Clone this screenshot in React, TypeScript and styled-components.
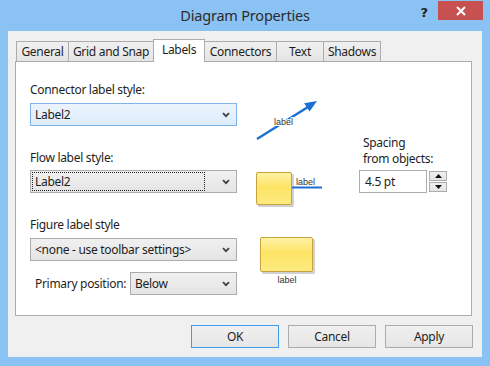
import styled, { createGlobalStyle } from "styled-components";

const Global = createGlobalStyle`
  html, body {
    margin: 0;
    padding: 0;
    background: #8bc2f4;
  }
  body {
    font-family: "Noto Sans", "Open Sans", sans-serif;
    font-size: 12px;
    letter-spacing: -0.3px;
    color: #1e1e1e;
  }
`;

const tabs = [
  { name: "General", width: 53 },
  { name: "Grid and Snap", width: 86 },
  { name: "Labels", width: 52 },
  { name: "Connectors", width: 73 },
  { name: "Text", width: 48 },
  { name: "Shadows", width: 58 },
];

const Window = styled.div`
  width: 490px;
  height: 366px;
  display: flex;
  flex-direction: column;
  background: #8bc2f4;
  overflow: hidden;
`;

const TitleBar = styled.div`
  height: 31px;
  display: grid;
  grid-template-columns: 1fr auto 1fr;
  align-items: start;
`;

const Title = styled.div`
  grid-column: 2;
  font-size: 14.5px;
  letter-spacing: -0.2px;
  line-height: 20px;
  padding-top: 5px;
  color: #2b2b2b;
`;

const TitleButtons = styled.div`
  grid-column: 3;
  justify-self: end;
  display: flex;
  padding-top: 1px;
  padding-right: 7px;
`;

const HelpButton = styled.div`
  width: 28px;
  height: 19px;
  padding-top: 6px;
  box-sizing: border-box;
  text-align: center;
  font-family: "DejaVu Sans", sans-serif;
  font-weight: bold;
  font-size: 13px;
  line-height: 12px;
  color: #222;
`;

const CloseButton = styled.div`
  width: 45px;
  height: 19px;
  background: #c75050;
  display: flex;
  align-items: center;
  justify-content: center;
`;

const Client = styled.div`
  margin: 0 8px 9px;
  height: 326px;
  box-sizing: border-box;
  padding: 8px 9px 9px 7px;
  background: #f0f0f0;
  display: flex;
  flex-direction: column;
`;

const TabStrip = styled.div`
  display: flex;
  align-items: flex-end;
  height: 23px;
  padding-left: 1px;
  margin-bottom: -1px;
  position: relative;
  z-index: 1;
`;

const Tab = styled.div<{ $w: number; $active?: boolean }>`
  box-sizing: border-box;
  width: ${(p) => p.$w}px;
  height: ${(p) => (p.$active ? 23 : 21)}px;
  margin-right: -1px;
  border: 1px solid #acacac;
  border-bottom: ${(p) => (p.$active ? "none" : "1px solid #acacac")};
  background: ${(p) =>
    p.$active ? "#ffffff" : "linear-gradient(#f0f0f0, #e5e5e5)"};
  display: flex;
  align-items: center;
  justify-content: center;
  padding-bottom: ${(p) => (p.$active ? 3 : 0)}px;
  position: relative;
  z-index: ${(p) => (p.$active ? 2 : 1)};
  white-space: nowrap;
`;

const Panel = styled.div`
  height: 256px;
  margin-right: 1px;
  box-sizing: border-box;
  border: 1px solid #acacac;
  background: #ffffff;
  padding: 20px 0 0 14px;
  display: grid;
  grid-template-columns: 207px 84px auto;
  grid-template-rows: 44px 43px 78px;
  column-gap: 19px;
  row-gap: 24px;
`;

const Field = styled.div<{ $gap: number }>`
  grid-column: 1;
  display: flex;
  flex-direction: column;
  gap: ${(p) => p.$gap}px;
`;

const Label = styled.div`
  line-height: 16px;
  white-space: nowrap;
`;

const Select = styled.div<{ $w?: number; $hot?: boolean }>`
  box-sizing: border-box;
  width: ${(p) => p.$w ?? 207}px;
  height: 23px;
  border: 1px solid ${(p) => (p.$hot ? "#7eb4ea" : "#acacac")};
  background: ${(p) =>
    p.$hot
      ? "linear-gradient(#ecf4fc, #dcecfc)"
      : "linear-gradient(#f0f0f0, #e5e5e5)"};
  display: flex;
  align-items: center;
  padding: 1px;
  flex: none;
`;

const SelectText = styled.div<{ $focus?: boolean }>`
  flex: 1;
  align-self: stretch;
  display: flex;
  align-items: center;
  padding-left: 2px;
  margin-right: 17px;
  border: 1px ${(p) => (p.$focus ? "dotted #222" : "solid transparent")};
  white-space: nowrap;
`;

const Chevron = styled.svg`
  flex: none;
  margin-right: 5px;
`;

const PrimaryRow = styled.div`
  display: flex;
  align-items: center;
  margin-top: 6px;
`;

const PrimaryLabel = styled(Label)`
  padding-left: 5px;
  flex: 1;
`;

const Picture = styled.svg<{ $row: number; $top: number }>`
  grid-column: 2;
  grid-row: ${(p) => p.$row};
  margin-top: ${(p) => p.$top}px;
  overflow: visible;
`;

const SpacingBox = styled.div`
  grid-column: 3;
  grid-row: 2;
  align-self: end;
  display: flex;
  flex-direction: column;
  gap: 3px;
`;

const SpacingLabel = styled(Label)`
  padding-left: 4px;
`;

const SpinRow = styled.div`
  display: flex;
  gap: 2px;
`;

const NumberInput = styled.div`
  box-sizing: border-box;
  width: 68px;
  height: 23px;
  border: 1px solid #acacac;
  background: #fff;
  padding-left: 5px;
  display: flex;
  align-items: center;
`;

const SpinButtons = styled.div`
  display: flex;
  flex-direction: column;
  gap: 1px;
  padding-top: 1px;
`;

const SpinButton = styled.div`
  box-sizing: border-box;
  width: 18px;
  height: 10px;
  border: 1px solid #acacac;
  background: linear-gradient(#f0f0f0, #e5e5e5);
  display: flex;
  align-items: center;
  justify-content: center;
`;

const ButtonRow = styled.div`
  display: flex;
  justify-content: flex-end;
  gap: 9px;
  margin-top: 9px;
`;

const Button = styled.div<{ $default?: boolean }>`
  box-sizing: border-box;
  width: 88px;
  height: 23px;
  border: 1px solid ${(p) => (p.$default ? "#3c9cf0" : "#acacac")};
  background: linear-gradient(#f0f0f0, #e5e5e5);
  display: flex;
  align-items: center;
  justify-content: center;
`;

const Dropdown = ({ text, w, hot, focus }: { text: string; w?: number; hot?: boolean; focus?: boolean }) => (
  <Select $w={w} $hot={hot}>
    <SelectText $focus={focus}>{text}</SelectText>
    <Chevron width="8" height="6" viewBox="0 0 8 6">
      <path d="M1 1.2 L4 4.2 L7 1.2" fill="none" stroke="#404040" strokeWidth="1.8" />
    </Chevron>
  </Select>
);

const Box = ({ x, y, w, h, id }: { x: number; y: number; w: number; h: number; id: string }) => (
  <>
    <defs>
      <linearGradient id={id} x1="0" y1="0" x2="0" y2="1">
        <stop offset="0" stopColor="#fff3a8" />
        <stop offset="0.45" stopColor="#fde465" />
        <stop offset="1" stopColor="#fdeb82" />
      </linearGradient>
    </defs>
    <rect x={x + 2} y={y + 2} width={w} height={h} rx="1.5" fill="#000" opacity="0.18" />
    <rect x={x + 0.5} y={y + 0.5} width={w - 1} height={h - 1} rx="1.5" fill={`url(#${id})`} stroke="#c9a23c" />
  </>
);

const SmallText = styled.text`
  font-family: "Liberation Sans", Arial, sans-serif;
  font-size: 9px;
  letter-spacing: 0;
  fill: #333;
`;

export default function App() {
  return (
    <>
      <Global />
      <Window>
        <TitleBar>
          <Title>Diagram Properties</Title>
          <TitleButtons>
            <HelpButton>?</HelpButton>
            <CloseButton>
              <svg width="10" height="10" viewBox="0 0 10 10">
                <path d="M1 1 L9 9 M9 1 L1 9" stroke="#fff" strokeWidth="2" />
              </svg>
            </CloseButton>
          </TitleButtons>
        </TitleBar>
        <Client>
          <TabStrip>
            {tabs.map((t) => (
              <Tab key={t.name} $w={t.width} $active={t.name === "Labels"}>
                {t.name}
              </Tab>
            ))}
          </TabStrip>
          <Panel>
            <Field $gap={5} style={{ gridRow: 1 }}>
              <Label>Connector label style:</Label>
              <Dropdown text="Label2" hot />
            </Field>
            <Picture $row={1} $top={14} width="70" height="50">
              <line x1="1" y1="43" x2="52" y2="11" stroke="#1a6fd4" strokeWidth="2.4" />
              <polygon points="61,5 53.6,15.6 48.2,7.2" fill="#1a6fd4" />
              <SmallText x="18" y="29" stroke="#fff" strokeWidth="2" paintOrder="stroke">
                label
              </SmallText>
            </Picture>

            <Field $gap={4} style={{ gridRow: 2 }}>
              <Label>Flow label style:</Label>
              <Dropdown text="Label2" focus />
            </Field>
            <Picture $row={2} $top={20} width="70" height="40">
              <Box x={0} y={2} w={36} h={33} id="flowFill" />
              <line x1="36" y1="17.5" x2="66" y2="17.5" stroke="#1a6fd4" strokeWidth="2" />
              <SmallText x="40" y="15">label</SmallText>
            </Picture>
            <SpacingBox>
              <SpacingLabel>
                Spacing
                <br />
                from objects:
              </SpacingLabel>
              <SpinRow>
                <NumberInput>4.5 pt</NumberInput>
                <SpinButtons>
                  <SpinButton>
                    <svg width="7" height="4" viewBox="0 0 7 4">
                      <polygon points="3.5,0 7,4 0,4" fill="#111" />
                    </svg>
                  </SpinButton>
                  <SpinButton>
                    <svg width="7" height="4" viewBox="0 0 7 4">
                      <polygon points="0,0 7,0 3.5,4" fill="#111" />
                    </svg>
                  </SpinButton>
                </SpinButtons>
              </SpinRow>
            </SpacingBox>

            <Field $gap={5} style={{ gridRow: 3 }}>
              <Label>Figure label style</Label>
              <Dropdown text="<none - use toolbar settings>" />
              <PrimaryRow>
                <PrimaryLabel>Primary position:</PrimaryLabel>
                <Dropdown text="Below" w={107} />
              </PrimaryRow>
            </Field>
            <Picture $row={3} $top={18} width="70" height="52">
              <Box x={4} y={2} w={53} h={35} id="figFill" />
              <SmallText x="31" y="48" textAnchor="middle">label</SmallText>
            </Picture>
          </Panel>
          <ButtonRow>
            <Button $default>OK</Button>
            <Button>Cancel</Button>
            <Button>Apply</Button>
          </ButtonRow>
        </Client>
      </Window>
    </>
  );
}
